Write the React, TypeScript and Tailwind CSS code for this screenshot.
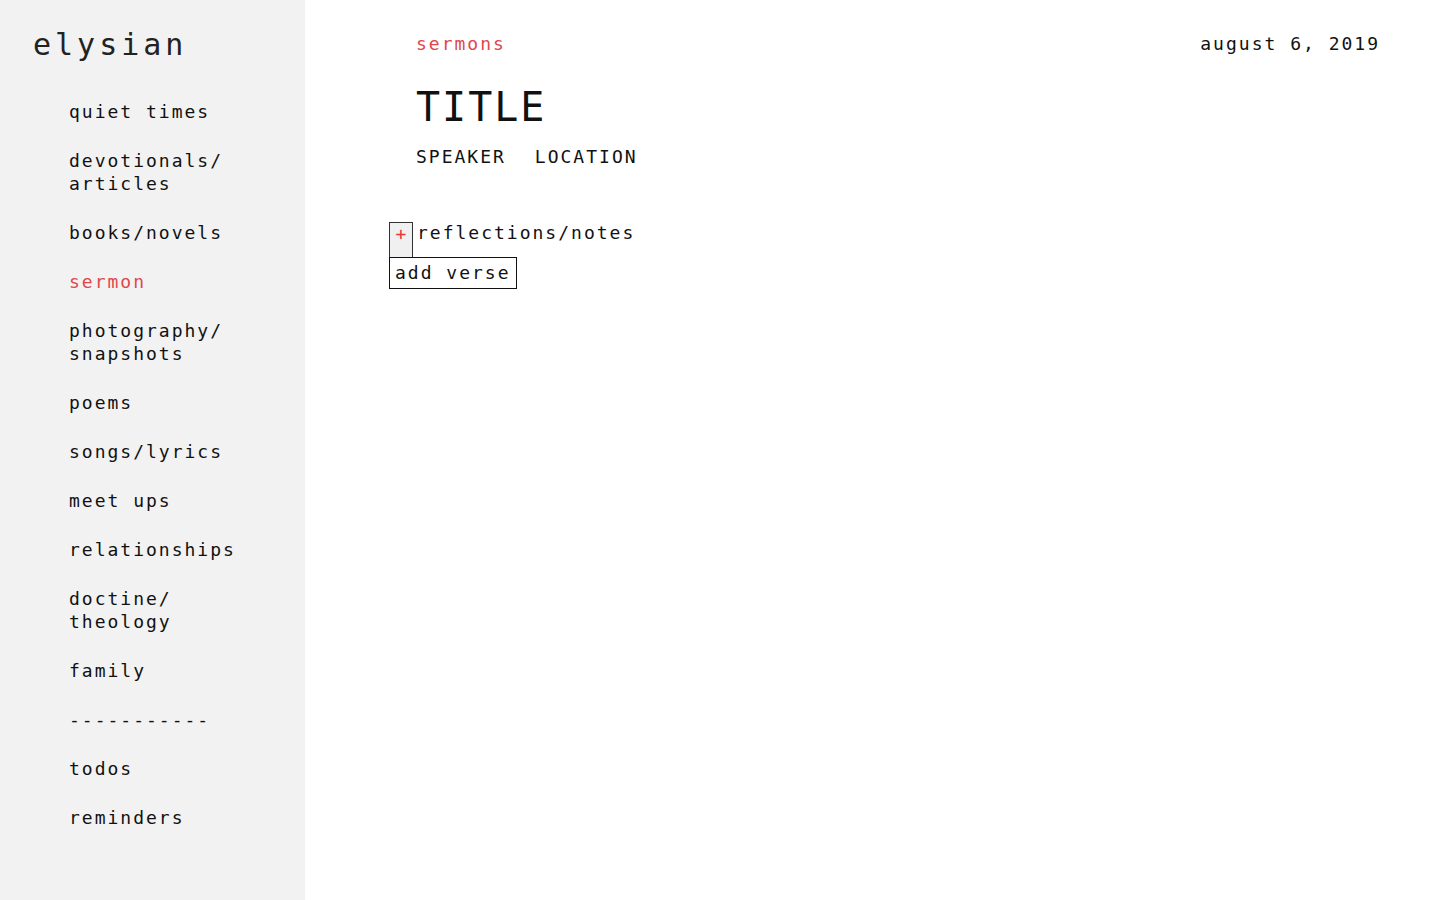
import React from "react";

const navItems: { label: string[]; active?: boolean }[] = [
  { label: ["quiet times"] },
  { label: ["devotionals/", "articles"] },
  { label: ["books/novels"] },
  { label: ["sermon"], active: true },
  { label: ["photography/", "snapshots"] },
  { label: ["poems"] },
  { label: ["songs/lyrics"] },
  { label: ["meet ups"] },
  { label: ["relationships"] },
  { label: ["doctine/", "theology"] },
  { label: ["family"] },
  { label: ["-----------"] },
  { label: ["todos"] },
  { label: ["reminders"] },
];

const mono = "font-['DejaVu_Sans_Mono','Liberation_Mono',monospace]";

export default function App() {
  return (
    <div className={`flex min-h-screen bg-white text-[#111] ${mono}`}>
      {/* Sidebar */}
      <aside className="w-[305px] shrink-0 bg-[#f2f2f2] pt-[27px] pb-10">
        <div className="pl-[33px] text-[30px] leading-[36px] tracking-[4px] font-light text-[#222]">
          elysian
        </div>
        <ul className="mt-[37px] pl-[69px] flex flex-col gap-[26px]">
          {navItems.map((item, i) => (
            <li
              key={i}
              className={`text-[18px] leading-[23px] tracking-[2px] cursor-pointer ${
                item.active ? "text-[#e0474c]" : "text-[#111]"
              }`}
            >
              {item.label.map((line) => (
                <div key={line}>{line}</div>
              ))}
            </li>
          ))}
        </ul>
      </aside>

      {/* Main */}
      <main className="flex-1 pl-[111px] pr-[60px] pt-[32px]">
        <div className="flex items-start justify-between">
          <div className="text-[18px] leading-[24px] tracking-[2px] text-[#e0474c]">sermons</div>
          <div className="text-[18px] leading-[24px] tracking-[2px]">august 6, 2019</div>
        </div>
        <h1 className="mt-[27px] text-[40px] leading-[48px] tracking-[2px]">TITLE</h1>
        <div className="mt-[14px] flex gap-[29px] text-[18px] leading-[24px] tracking-[2px]">
          <span>SPEAKER</span>
          <span>LOCATION</span>
        </div>

        <div className="mt-[53px] -ml-[27px]">
          <div className="flex items-start">
            <button className="w-[24px] h-[35px] bg-[#f0f0f0] border border-[#333] border-b-0 flex justify-center text-[#e8343c] text-[18px] leading-[22px]">
              +
            </button>
            <span className="ml-[4px] text-[18px] leading-[22px] tracking-[2px]">reflections/notes</span>
          </div>
          <button className="block border border-[#111] px-[5px] h-[32px] text-[18px] leading-[30px] tracking-[2px]">
            add verse
          </button>
        </div>
      </main>
    </div>
  );
}
